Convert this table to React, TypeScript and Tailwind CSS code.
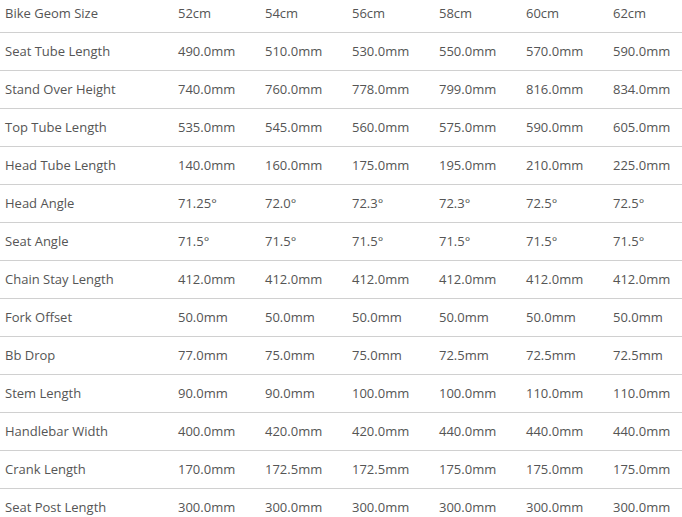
import React from 'react';

const sizes = ['52cm', '54cm', '56cm', '58cm', '60cm', '62cm'];

const rows: [string, string[]][] = [
  ['Seat Tube Length', ['490.0mm', '510.0mm', '530.0mm', '550.0mm', '570.0mm', '590.0mm']],
  ['Stand Over Height', ['740.0mm', '760.0mm', '778.0mm', '799.0mm', '816.0mm', '834.0mm']],
  ['Top Tube Length', ['535.0mm', '545.0mm', '560.0mm', '575.0mm', '590.0mm', '605.0mm']],
  ['Head Tube Length', ['140.0mm', '160.0mm', '175.0mm', '195.0mm', '210.0mm', '225.0mm']],
  ['Head Angle', ['71.25°', '72.0°', '72.3°', '72.3°', '72.5°', '72.5°']],
  ['Seat Angle', ['71.5°', '71.5°', '71.5°', '71.5°', '71.5°', '71.5°']],
  ['Chain Stay Length', ['412.0mm', '412.0mm', '412.0mm', '412.0mm', '412.0mm', '412.0mm']],
  ['Fork Offset', ['50.0mm', '50.0mm', '50.0mm', '50.0mm', '50.0mm', '50.0mm']],
  ['Bb Drop', ['77.0mm', '75.0mm', '75.0mm', '72.5mm', '72.5mm', '72.5mm']],
  ['Stem Length', ['90.0mm', '90.0mm', '100.0mm', '100.0mm', '110.0mm', '110.0mm']],
  ['Handlebar Width', ['400.0mm', '420.0mm', '420.0mm', '440.0mm', '440.0mm', '440.0mm']],
  ['Crank Length', ['170.0mm', '172.5mm', '172.5mm', '175.0mm', '175.0mm', '175.0mm']],
  ['Seat Post Length', ['300.0mm', '300.0mm', '300.0mm', '300.0mm', '300.0mm', '300.0mm']],
];

const Row = ({ label, values }: { label: string; values: string[] }) => (
  <div className="grid grid-cols-[173px_repeat(6,87px)] h-[38px] items-center border-b border-[#d0d0d0]">
    <div className="pl-[5px] whitespace-nowrap">{label}</div>
    {values.map((v, i) => (
      <div key={i} className="pl-[5px] whitespace-nowrap">{v}</div>
    ))}
  </div>
);

export default function App() {
  return (
    <div className="w-[682px] h-[517px] overflow-hidden bg-white text-[13px] text-[#555] font-['Open_Sans',sans-serif]">
      <div className="-mt-[5px]">
        <Row label="Bike Geom Size" values={sizes} />
        {rows.map(([label, values]) => (
          <Row key={label} label={label} values={values} />
        ))}
      </div>
    </div>
  );
}
